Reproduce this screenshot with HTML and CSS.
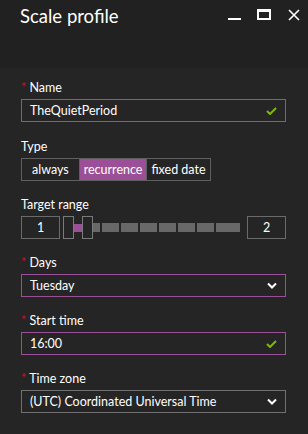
FILE: index.html
```html
<!DOCTYPE html>
<html>
<head>
    <title>Scale profile</title>
    <link rel="stylesheet" href="styles.css">
</head>
<body>
    <div class="blade">
        <div class="header">
            <h1>Scale profile</h1>
            <div class="controls">
                <svg class="icon min" width="13" height="12" viewBox="0 0 13 12"><rect x="0" y="9" width="13" height="2" fill="#fff"/></svg>
                <svg class="icon max" width="14" height="11" viewBox="0 0 14 11"><path d="M1 1.5h12v8.5H1z" fill="none" stroke="#fff" stroke-width="2"/><rect x="0" y="0" width="14" height="3" fill="#fff"/></svg>
                <svg class="icon" width="12" height="12" viewBox="0 0 12 12"><path d="M1 1l10 10M11 1L1 11" stroke="#fff" stroke-width="1.6"/></svg>
            </div>
        </div>

        <div class="content">
            <div class="field first">
                <label><span class="req">*</span> Name</label>
                <div class="input active">
                    <span>TheQuietPeriod</span>
                    <svg width="11" height="8" viewBox="0 0 11 8"><path d="M1 4l3 3 6-6" fill="none" stroke="#7fba00" stroke-width="2"/></svg>
                </div>
            </div>

            <div class="field">
                <label>Type</label>
                <div class="toggle">
                    <span class="opt always">always</span>
                    <span class="opt selected">recurrence</span>
                    <span class="opt">fixed date</span>
                </div>
            </div>

            <div class="field">
                <label>Target range</label>
                <div class="range">
                    <div class="num">1</div>
                    <div class="track">
                        <div class="handle"></div>
                        <div class="fill"></div>
                        <div class="handle"></div>
                        <div class="seg s1"></div>
                        <div class="seg"></div>
                        <div class="seg"></div>
                        <div class="seg"></div>
                        <div class="seg"></div>
                        <div class="seg"></div>
                        <div class="seg"></div>
                        <div class="seg last"></div>
                    </div>
                    <div class="num">2</div>
                </div>
            </div>

            <div class="field">
                <label><span class="req">*</span> Days</label>
                <div class="input active">
                    <span>Tuesday</span>
                    <svg width="10" height="7" viewBox="0 0 10 7"><path d="M1 1.5l4 4 4-4" fill="none" stroke="#fff" stroke-width="2"/></svg>
                </div>
            </div>

            <div class="field">
                <label><span class="req">*</span> Start time</label>
                <div class="input active">
                    <span>16:00</span>
                    <svg width="11" height="8" viewBox="0 0 11 8"><path d="M1 4l3 3 6-6" fill="none" stroke="#7fba00" stroke-width="2"/></svg>
                </div>
            </div>

            <div class="field">
                <label><span class="req">*</span> Time zone</label>
                <div class="input">
                    <span>(UTC) Coordinated Universal Time</span>
                    <svg width="10" height="7" viewBox="0 0 10 7"><path d="M1 1.5l4 4 4-4" fill="none" stroke="#fff" stroke-width="2"/></svg>
                </div>
            </div>
        </div>
    </div>
</body>
</html>
```

FILE: styles.css
```css
body {
    margin: 0;
    padding: 0;
    background-color: #252525;
    font-family: Lato, "Open Sans", sans-serif;
    color: #fff;
}
.blade {
    width: 308px;
    height: 434px;
}
.header {
    height: 68px;
    background-color: #212121;
    display: flex;
    justify-content: space-between;
    align-items: flex-start;
}
.header h1 {
    margin: 0;
    padding: 3px 0 0 20px;
    font-size: 18.5px;
    font-weight: normal;
    line-height: 26px;
}
.controls {
    display: flex;
    align-items: flex-start;
    padding: 9px 8px 0 0;
}
.icon {
    display: block;
}
.icon.min {
    margin-right: 16px;
}
.icon.max {
    margin-right: 17px;
}
.content {
    padding: 12px 22px 0 21px;
}
.field {
    margin-bottom: 16px;
}
.field.first {
    margin-bottom: 17px;
}
label {
    display: block;
    font-size: 12.5px;
    line-height: 16px;
    margin-bottom: 3px;
}
.req {
    color: #d0102a;
}
.input {
    height: 21px;
    border: 1px solid #707070;
    display: flex;
    align-items: center;
    justify-content: space-between;
    padding: 0 8px 0 8px;
    font-size: 12.5px;
}
.input.active {
    border-color: #9b4f96;
}
.toggle {
    display: flex;
    width: max-content;
    height: 23px;
    border: 1px solid #5f5f5f;
    box-sizing: border-box;
}
.opt {
    display: flex;
    align-items: center;
    padding: 0 4px;
    font-size: 12.5px;
    border-left: 1px solid #5f5f5f;
}
.opt.always {
    border-left: none;
    padding: 0 10px;
}
.opt.selected {
    background-color: #9b4f96;
}
.range {
    display: flex;
    align-items: center;
}
.num {
    width: 38px;
    height: 21px;
    border: 1px solid #6a6a6a;
    display: flex;
    align-items: center;
    justify-content: center;
    font-size: 12.5px;
}
.track {
    flex: 1;
    display: flex;
    align-items: center;
    margin: 0 7px 0 3px;
    height: 23px;
}
.handle {
    width: 9px;
    height: 21px;
    border: 1px solid #7a7a7a;
}
.fill {
    width: 8px;
    height: 8px;
    background-color: #9b4f96;
}
.seg {
    width: 17px;
    height: 9px;
    background-color: #686868;
    margin-left: 2px;
}
.seg.s1 {
    width: 7px;
    margin-left: 0;
}
.seg.last {
    width: 24px;
}
```
